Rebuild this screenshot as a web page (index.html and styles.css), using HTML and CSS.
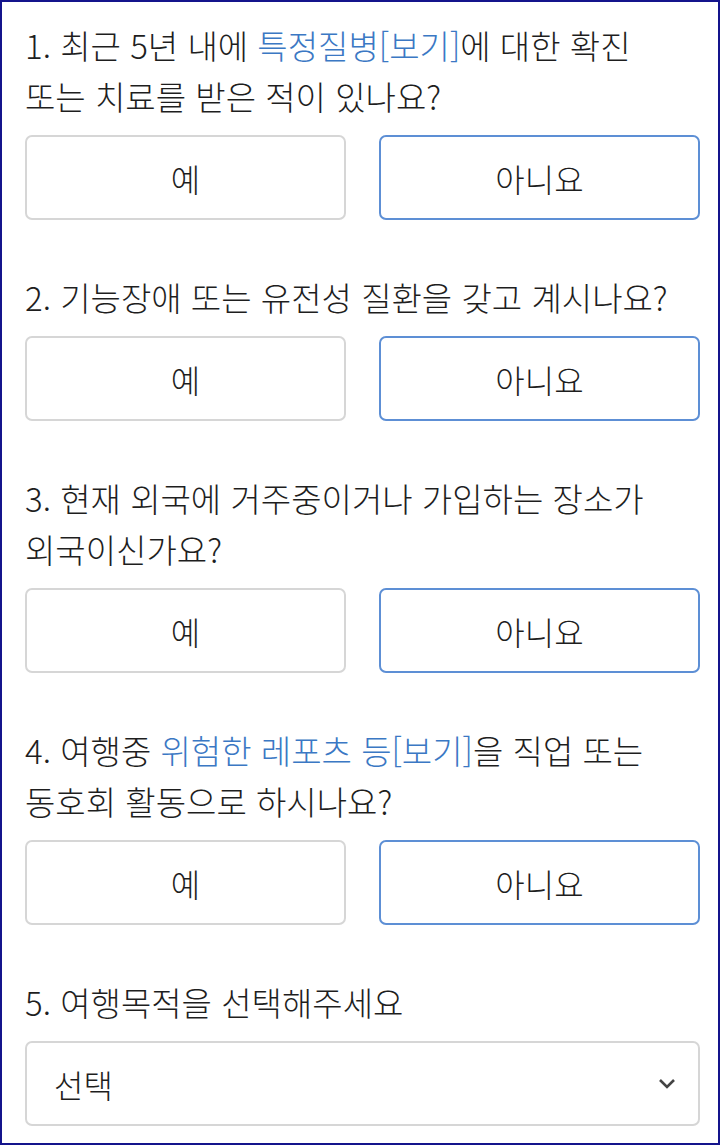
FILE: index.html
```html
<!DOCTYPE html>
<html lang="ko">
<head>
  <meta charset="UTF-8" />
  <meta name="viewport" content="width=device-width, initial-scale=1.0" />
  <title>여행자보험 사전질문</title>
  <link rel="stylesheet" href="styles.css">
</head>
<body>
  <div class="survey">
    <div class="question">
      <p class="question-text">1. 최근 5년 내에 <a href="#" class="hint">특정질병[보기]</a>에 대한 확진 또는 치료를 받은 적이 있나요?</p>
      <div class="choices">
        <button class="choice">예</button>
        <button class="choice active">아니요</button>
      </div>
    </div>

    <div class="question">
      <p class="question-text">2. 기능장애 또는 유전성 질환을 갖고 계시나요?</p>
      <div class="choices">
        <button class="choice">예</button>
        <button class="choice active">아니요</button>
      </div>
    </div>

    <div class="question">
      <p class="question-text">3. 현재 외국에 거주중이거나 가입하는 장소가 외국이신가요?</p>
      <div class="choices">
        <button class="choice">예</button>
        <button class="choice active">아니요</button>
      </div>
    </div>

    <div class="question">
      <p class="question-text">4. 여행중 <a href="#" class="hint">위험한 레포츠 등[보기]</a>을 직업 또는 동호회 활동으로 하시나요?</p>
      <div class="choices">
        <button class="choice">예</button>
        <button class="choice active">아니요</button>
      </div>
    </div>

    <div class="question">
      <p class="question-text">5. 여행목적을 선택해주세요</p>
      <div class="select-box">
        <span>선택</span>
        <svg class="chevron" width="18" height="12" viewBox="0 0 18 12">
          <path d="M2 2 L9 9 L16 2" fill="none" stroke="#444" stroke-width="2.6" />
        </svg>
      </div>
    </div>
  </div>
</body>
</html>
```

FILE: styles.css
```css
* {
  box-sizing: border-box;
}

html, body {
  margin: 0;
  padding: 0;
}

body {
  font-family: "Noto Sans CJK KR", "Noto Sans", sans-serif;
  font-weight: 300;
  color: #1e1e1e;
  background-color: #fff;
}

.survey {
  height: 1145px;
  border: 2px solid #14148c;
  padding: 18px 18px 0 23px;
}

.question {
  margin-bottom: 52px;
}

.question-text {
  margin: 0 0 13px;
  font-size: 33px;
  line-height: 51px;
  word-break: keep-all;
}

.hint {
  color: #3b78c4;
  text-decoration: none;
}

.choices {
  display: flex;
  gap: 33px;
}

.choice {
  flex: 1;
  height: 85px;
  background: #fff;
  border: 2px solid #d6d6d6;
  border-radius: 7px;
  font-family: inherit;
  font-weight: 300;
  font-size: 32px;
  color: #1e1e1e;
  cursor: pointer;
}

.choice.active {
  border-color: #5d8fd5;
}

.select-box {
  height: 85px;
  display: flex;
  align-items: center;
  justify-content: space-between;
  padding: 0 22px 0 27px;
  border: 2px solid #d6d6d6;
  border-radius: 7px;
  font-size: 32px;
}
```
